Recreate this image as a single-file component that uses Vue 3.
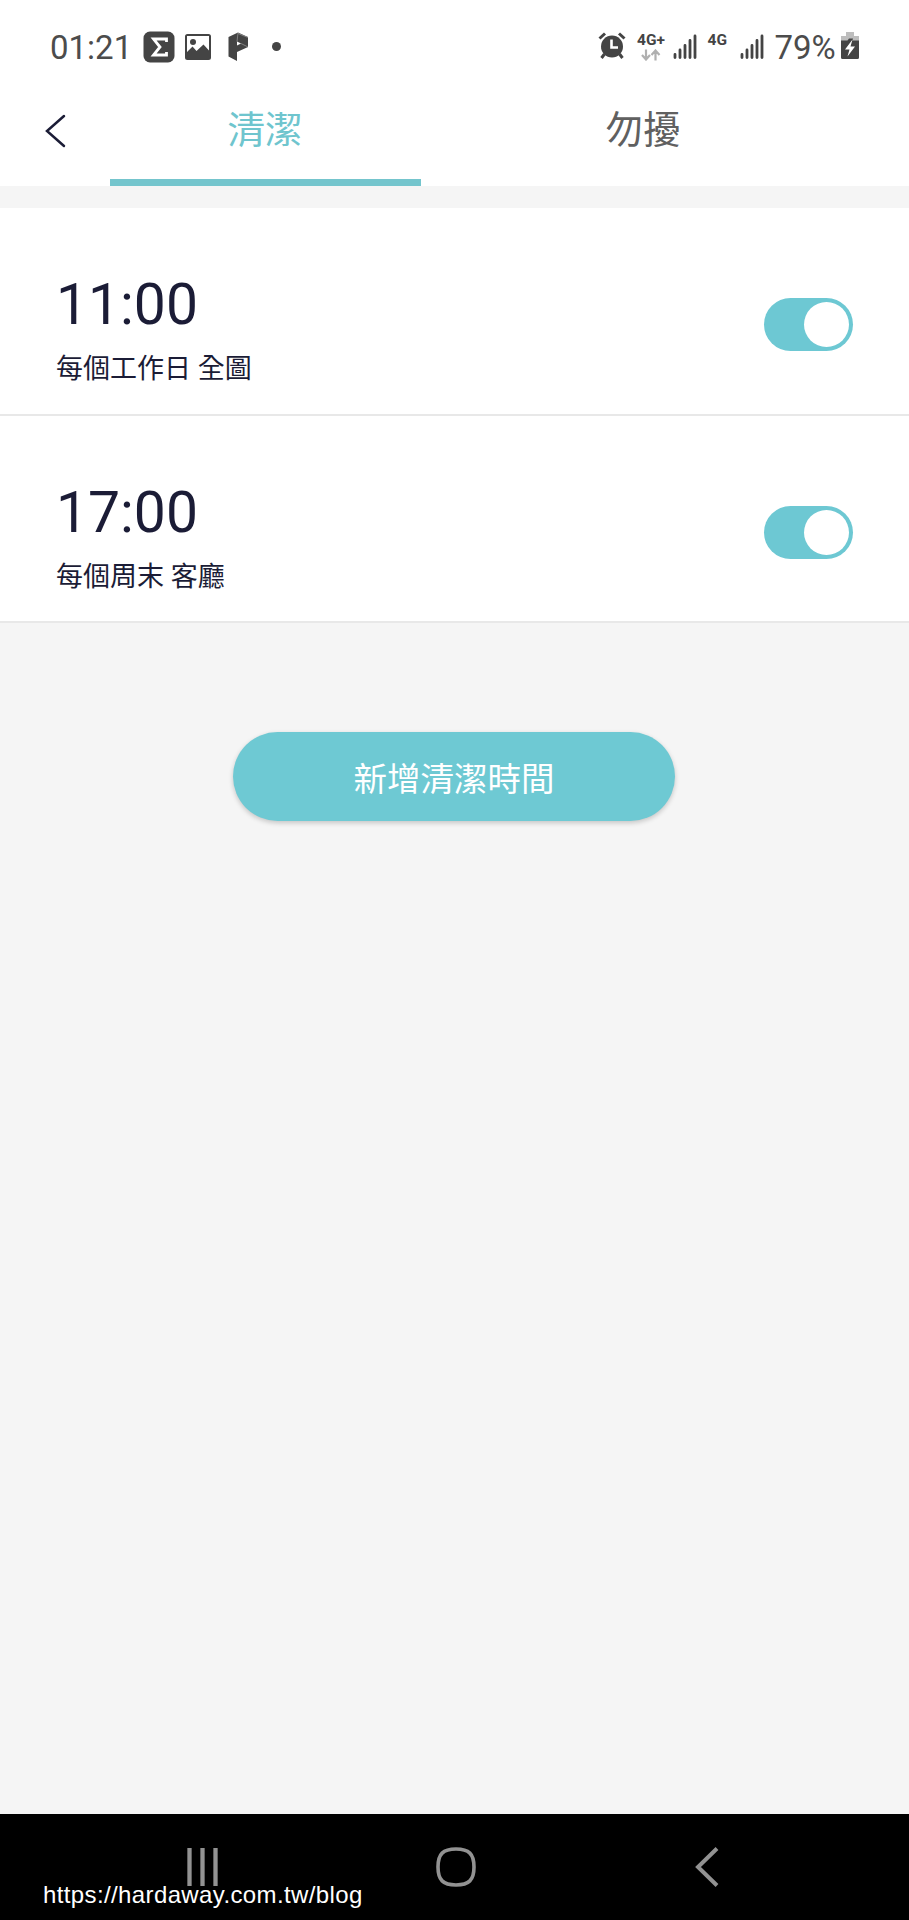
<template>
  <div class="screen">
    <header class="top">
      <div class="status-bar">
        <span class="clock">01:21</span>
        <svg class="icon-sigma" viewBox="0 0 32 32" width="32" height="32">
          <rect x="0.5" y="0.5" width="31" height="31" rx="6.5" fill="#444" />
          <path d="M23.500 11V8H10.500L17 16L10.500 24H23.500V21" fill="none" stroke="#fff" stroke-width="2.800" />
        </svg>
        <svg class="icon-image" viewBox="0 0 26 26" width="26" height="26">
          <path
            fill="#444"
            fill-rule="evenodd"
            d="M2.5 0h21A2.5 2.5 0 0 1 26 2.500v21a2.500 2.500 0 0 1-2.500 2.500h-21A2.500 2.500 0 0 1 0 23.500v-21A2.500 2.500 0 0 1 2.500 0zM2 2v16l5.500-5.500l4 4.500l7-6.500l5.500 6V2z"
          />
          <circle cx="8" cy="8" r="3" fill="#444" />
        </svg>
        <svg class="icon-p" viewBox="0 0 21 29" width="21" height="29">
          <path fill="#444" d="M0.500 5L10 0.500L20 5V15L9 20V29L0.500 24.500z" />
          <path d="M9 9.500L13 11.500L9 13.500z" fill="#fff" />
          <path d="M10 1L9 9.500M13 11.500L20 15M10 1.500L20 5.500" fill="none" stroke="#999" stroke-width="0.7" />
        </svg>
        <span class="dot"></span>

        <div class="status-right">
          <svg class="icon-alarm" viewBox="0 0 28 27" width="28" height="27">
            <circle cx="14" cy="14.500" r="11" fill="#444" />
            <path
              d="M1.500 6.500L7 1.500M26.500 6.500L21 1.500M6.500 22L3.500 26M21.500 22L24.500 26"
              fill="none"
              stroke="#444"
              stroke-width="3"
            />
            <path d="M13.500 7.500V15.500H20" fill="none" stroke="#fff" stroke-width="2.600" />
          </svg>
          <div class="network">
            <span class="net-label">4G+</span>
            <svg viewBox="0 0 20 12" width="20" height="12">
              <path
                d="M5 0.500V10M1 6L5 10.500L9 6M14.500 11.500V2M10.500 6L14.500 1.500L18.500 6"
                fill="none"
                stroke="#b0b0b0"
                stroke-width="2.200"
              />
            </svg>
          </div>
          <svg class="signal" viewBox="0 0 24 25" width="24" height="25">
            <path :d="signalBars" stroke="#444" stroke-width="2.800" stroke-linecap="round" />
          </svg>
          <span class="net-label second">4G</span>
          <svg class="signal" viewBox="0 0 24 25" width="24" height="25">
            <path :d="signalBars" stroke="#444" stroke-width="2.800" stroke-linecap="round" />
          </svg>
          <span class="percent">79%</span>
          <svg class="icon-battery" viewBox="0 0 18 27" width="18" height="27">
            <path d="M5 0H13V4H18V9H0V4H5z" fill="#bdbdbd" />
            <path d="M0 8.500H6.500L8 6.500H12L11.500 8.500H18V25.500Q18 27 16.500 27H1.500Q0 27 0 25.500z" fill="#444" />
            <path d="M11.500 7.500L4 17.500H8.500L6.500 24.500L14 14.500H9.500z" fill="#fff" />
          </svg>
        </div>
      </div>

      <nav class="tabs">
        <button class="back" aria-label="返回">
          <svg viewBox="0 0 21 34" width="21" height="34">
            <path d="M19 2L2 17L19 32" fill="none" stroke="#1b1c36" stroke-width="2.500" stroke-linecap="round" />
          </svg>
        </button>
        <button
          v-for="tab in tabs"
          :key="tab.key"
          class="tab"
          :class="{ active: tab.key === activeTab }"
          @click="activeTab = tab.key"
        >
          {{ tab.label }}
        </button>
      </nav>
    </header>

    <main class="content">
      <ul class="schedule-list">
        <li v-for="item in schedules" :key="item.time" class="schedule">
          <div class="info">
            <div class="time">{{ item.time }}</div>
            <div class="desc">{{ item.desc }}</div>
          </div>
          <button
            class="switch"
            :class="{ on: item.enabled }"
            role="switch"
            :aria-checked="item.enabled"
            @click="item.enabled = !item.enabled"
          >
            <span class="knob"></span>
          </button>
        </li>
      </ul>
      <button class="add-btn">新增清潔時間</button>
    </main>

    <footer class="nav-bar">
      <svg class="nav-recent" viewBox="0 0 31 38" width="31" height="38">
        <path d="M2.500 0V38M15.500 0V38M28.500 0V38" stroke="#929292" stroke-width="4.300" />
      </svg>
      <svg class="nav-home" viewBox="0 0 40 40" width="40" height="40">
        <path
          d="M20 2C33 2 38 7 38 20S33 38 20 38S2 33 2 20S7 2 20 2z"
          fill="none"
          stroke="#929292"
          stroke-width="3.600"
        />
      </svg>
      <svg class="nav-back" viewBox="0 0 24 40" width="24" height="40">
        <path d="M22 1.500L3 20L22 38.500" fill="none" stroke="#929292" stroke-width="4" />
      </svg>
      <span class="watermark">https://hardaway.com.tw/blog</span>
    </footer>
  </div>
</template>

<script setup>
import { ref } from 'vue'

const activeTab = ref('clean')

const tabs = [
  { key: 'clean', label: '清潔' },
  { key: 'dnd', label: '勿擾' }
]

const schedules = ref([
  { time: '11:00', desc: '每個工作日 全圖', enabled: true },
  { time: '17:00', desc: '每個周末 客廳', enabled: true }
])

const signalBars = 'M2 20.5V23.5M7 16V23.5M12 11.5V23.5M17 6.5V23.5M22 2V23.5'
</script>

<style>
body {
  background-color: #f5f5f5;
}
</style>

<style scoped>
.screen {
  display: flex;
  flex-direction: column;
  width: 909px;
  height: 1920px;
  overflow: hidden;
  background-color: #f5f5f5;
  font-family: Roboto, 'Noto Sans CJK TC', sans-serif;
}

button {
  padding: 0;
  border: none;
  background: none;
  font-family: inherit;
  cursor: pointer;
}

.top {
  height: 186px;
  background-color: #fff;
}

.status-bar {
  display: flex;
  align-items: flex-start;
  height: 80px;
  padding: 0 50px;
  box-sizing: border-box;
  color: #444;
}

.clock,
.percent {
  margin-top: 28px;
  font-size: 33px;
  line-height: 39px;
  color: #4c4c4c;
}

.clock {
  width: 93px;
}

.icon-sigma {
  margin-top: 31px;
}

.icon-image {
  margin: 34px 0 0 10px;
}

.icon-p {
  margin: 32px 0 0 17px;
}

.dot {
  width: 9px;
  height: 9px;
  margin: 42px 0 0 23px;
  border-radius: 50%;
  background-color: #444;
}

.status-right {
  display: flex;
  align-items: flex-start;
  margin-left: auto;
}

.icon-alarm {
  margin: 32px 12px 0 0;
}

.network {
  display: flex;
  flex-direction: column;
  align-items: center;
  width: 27px;
  margin: 31px 8px 0 0;
}

.net-label {
  font-size: 15.500px;
  line-height: 18px;
  font-weight: 700;
}

.net-label.second {
  width: 20px;
  margin: 31px 12px 0 11px;
}

.signal {
  margin-top: 34px;
}

.percent {
  width: 62px;
  margin-left: 11px;
}

.icon-battery {
  margin: 32px 0 0 4.500px;
}

.tabs {
  display: flex;
  height: 106px;
}

.back {
  display: flex;
  width: 110px;
  padding: 34px 0 0 45px;
}

.tab {
  width: 311px;
  margin-right: 67px;
  padding: 0 1px 6px 0;
  border-top: 7px solid transparent;
  border-bottom: 7px solid transparent;
  font-size: 37.500px;
  line-height: 54px;
  color: #606060;
}

.tab.active {
  color: #6fc5ce;
  border-bottom-color: #74c5cd;
}

.content {
  flex: 1;
  padding-top: 22px;
}

.schedule-list {
  margin: 0;
  padding: 0;
  list-style: none;
}

.schedule {
  display: flex;
  justify-content: space-between;
  height: 207.500px;
  padding: 0 56px;
  box-sizing: border-box;
  border-bottom: 2px solid #e8e8e8;
  background-color: #fff;
  color: #1b1c36;
}

.time {
  margin-top: 63px;
  font-size: 57px;
  line-height: 68px;
}

.desc {
  margin-top: 10px;
  font-size: 27px;
  line-height: 40px;
}

.switch {
  display: flex;
  width: 89px;
  height: 53px;
  margin-top: 90px;
  padding: 4px;
  box-sizing: border-box;
  border-radius: 27px;
  background-color: #ccc;
}

.switch.on {
  justify-content: flex-end;
  background-color: #6dc8d3;
}

.knob {
  width: 45px;
  height: 45px;
  border-radius: 50%;
  background-color: #fff;
}

.add-btn {
  display: block;
  width: 442px;
  height: 89px;
  margin: 109px 0 0 233px;
  padding-top: 6px;
  border-radius: 45px;
  background-color: #6ec9d3;
  box-shadow: 0 2px 5px rgba(0, 0, 0, 0.2);
  font-size: 33.500px;
  line-height: 48px;
  color: #fff;
}

.nav-bar {
  position: relative;
  display: flex;
  align-items: flex-start;
  height: 106px;
  background-color: #000;
}

.nav-recent {
  margin: 34px 0 0 187px;
}

.nav-home {
  margin: 33px 0 0 218px;
}

.nav-back {
  margin: 33px 0 0 219px;
}

.watermark {
  position: absolute;
  left: 43px;
  bottom: 11px;
  font-family: 'Liberation Sans', sans-serif;
  font-size: 24px;
  line-height: 28px;
  letter-spacing: 0.380px;
  color: #fff;
  white-space: nowrap;
}
</style>
